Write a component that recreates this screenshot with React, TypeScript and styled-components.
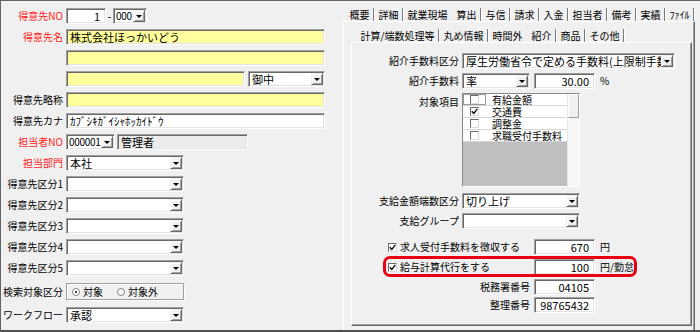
import { Fragment } from 'react'
import styled, { createGlobalStyle, css } from 'styled-components'

const GlobalStyle = createGlobalStyle`
  html, body {
    margin: 0;
    padding: 0;
    background: #f0f0f0;
  }
  body {
    font-family: "Noto Sans CJK JP", "Noto Sans", sans-serif;
    color: #000;
  }
  * {
    box-sizing: border-box;
  }
`

const sunken = css`
  height: 16px;
  border: 1px solid;
  border-color: #a0a0a0 #ffffff #ffffff #a0a0a0;
  box-shadow: inset 1px 1px 0 #696969, inset -1px -1px 0 #e3e3e3;
`

const Window = styled.div`
  width: 700px;
  height: 332px;
  display: flex;
  background: #f0f0f0;
  border-top: 1px solid #646464;
  border-left: 1px solid #646464;
  border-bottom: 2px solid #505050;
  overflow: hidden;
`

const LeftPanel = styled.div`
  width: 342px;
  flex: none;
  display: flex;
  flex-direction: column;
  padding-top: 7px;
`

const Row = styled.div<{ $mb?: number; $top?: boolean; $h?: number }>`
  display: flex;
  align-items: ${p => (p.$top ? 'flex-start' : 'center')};
  height: ${p => p.$h ?? 16}px;
  margin-bottom: ${p => p.$mb ?? 5}px;
  flex: none;
`

const Label = styled.div<{ $req?: boolean; $w?: number; $pt?: number; $mr?: number }>`
  width: ${p => p.$w ?? 62}px;
  flex: none;
  margin-right: ${p => p.$mr ?? 3}px;
  padding-top: ${p => p.$pt ?? 0}px;
  text-align: right;
  font-size: 10px;
  line-height: 12px;
  white-space: nowrap;
  color: ${p => (p.$req ? '#ff2020' : '#000')};
`

const Field = styled.div<{ $w: number; $bg?: string; $right?: boolean }>`
  ${sunken}
  width: ${p => p.$w}px;
  flex: none;
  background: ${p => p.$bg ?? '#ffffff'};
  padding: 0 5px 0 3px;
  font-size: 11px;
  line-height: 14px;
  text-align: ${p => (p.$right ? 'right' : 'left')};
  white-space: nowrap;
  overflow-x: clip;
`

const SelectBox = styled.div<{ $w: number }>`
  ${sunken}
  width: ${p => p.$w}px;
  flex: none;
  display: flex;
  align-items: center;
  background: #fff;
  padding: 1px;
`

const SelectText = styled.span<{ $tight?: boolean }>`
  flex: 1;
  min-width: 0;
  padding-left: ${p => (p.$tight ? 1 : 2)}px;
  font-size: ${p => (p.$tight ? 10 : 11)}px;
  letter-spacing: ${p => (p.$tight ? '-0.3px' : 'normal')};
  line-height: 12px;
  white-space: nowrap;
  overflow-x: clip;
`

const DropButton = styled.span`
  width: 12px;
  height: 12px;
  flex: none;
  display: flex;
  align-items: center;
  justify-content: center;
  background: #f0f0f0;
  border: 1px solid;
  border-color: #f0f0f0 #696969 #696969 #f0f0f0;
  box-shadow: inset 1px 1px 0 #fff, inset -1px -1px 0 #a0a0a0;

  &::after {
    content: '';
    border-left: 3px solid transparent;
    border-right: 3px solid transparent;
    border-top: 3px solid #000;
    margin-top: 1px;
  }
`

const Dash = styled.span`
  width: 7px;
  flex: none;
  text-align: center;
  font-size: 11px;
`

const Gap = styled.span<{ $w: number }>`
  width: ${p => p.$w}px;
  flex: none;
`

const GroupBox = styled.div`
  width: 119px;
  height: 18px;
  flex: none;
  display: flex;
  align-items: center;
  gap: 14px;
  padding-left: 5px;
  border: 1px solid;
  border-color: #a0a0a0 #fff #fff #a0a0a0;
  box-shadow: inset -1px -1px 0 #a0a0a0, inset 1px 1px 0 #fff;
`

const RadioItem = styled.span`
  display: flex;
  align-items: center;
  gap: 3px;
  font-size: 10px;
  line-height: 12px;
`

const RadioDot = styled.span<{ $on?: boolean }>`
  width: 8px;
  height: 8px;
  border-radius: 50%;
  border: 1px solid #808080;
  background: #fff;
  display: flex;
  align-items: center;
  justify-content: center;

  &::after {
    content: '';
    width: 2px;
    height: 2px;
    border-radius: 50%;
    background: ${p => (p.$on ? '#000' : 'transparent')};
  }
`

/* right side */

const RightPanel = styled.div`
  flex: 1;
  display: flex;
  flex-direction: column;
`

const TabStrip = styled.div<{ $pl: number }>`
  height: 20px;
  flex: none;
  display: flex;
  align-items: flex-end;
  padding-left: ${p => p.$pl}px;
`

const Tab = styled.span<{ $active?: boolean }>`
  padding: 0 3.5px;
  font-size: 10px;
  line-height: 13px;
  white-space: nowrap;
  color: #000;
`

const Sep = styled.span<{ $hidden?: boolean }>`
  width: 2px;
  height: 13px;
  flex: none;
  border-left: 1px solid #7a7a7a;
  border-right: 1px solid #fff;
  visibility: ${p => (p.$hidden ? 'hidden' : 'visible')};
`

const OuterPage = styled.div`
  flex: 1;
  display: flex;
  flex-direction: column;
  margin-right: 5px;
  padding: 0 2px 0 7px;
  border-left: 1px solid #fff;
  border-top: 1px solid #fff;
  border-right: 1px solid #696969;
  box-shadow: inset -1px 0 0 #a0a0a0;
`

const InnerPage = styled.div`
  flex: 1;
  display: flex;
  flex-direction: column;
  margin-bottom: 4px;
  padding-top: 10px;
  border-left: 1px solid #fff;
  border-top: 1px solid #fff;
  border-right: 1px solid #696969;
  border-bottom: 1px solid #696969;
  box-shadow: inset -1px -1px 0 #a0a0a0;
`

const Unit = styled.span`
  margin-left: 5px;
  font-size: 10px;
  line-height: 12px;
  white-space: nowrap;
`

const ListBox = styled.div`
  width: 118px;
  height: 94px;
  flex: none;
  display: flex;
  background: #c0c0c0;
  border: 1px solid;
  border-color: #8a8a8a #fff #fff #8a8a8a;
`

const ListRows = styled.div`
  flex: 1;
  display: flex;
  flex-direction: column;
`

const ListRow = styled.div`
  height: 12px;
  flex: none;
  display: flex;
  align-items: center;
  background: #fff;
  border-bottom: 1px solid #d4d4d4;
`

const CheckCell = styled.span<{ $focus?: boolean }>`
  width: 23px;
  height: 100%;
  flex: none;
  display: flex;
  align-items: center;
  justify-content: center;
  border: 1px solid ${p => (p.$focus ? '#9a9a9a' : 'transparent')};
`

const ItemText = styled.span`
  padding-left: 6px;
  font-size: 10px;
  line-height: 11px;
  white-space: nowrap;
`

const ScrollTrack = styled.div`
  width: 12px;
  flex: none;
  background: #f6f6f6;
  border-left: 1px solid #e6e6e6;
`

const ScrollThumb = styled.div`
  height: 24px;
  background: #f0f0f0;
  border: 1px solid;
  border-color: #fff #a0a0a0 #a0a0a0 #fff;
`

const Box = styled.span`
  width: 9px;
  height: 9px;
  flex: none;
  display: inline-flex;
  align-items: center;
  justify-content: center;
  background: #fff;
  border: 1px solid;
  border-color: #6a6a6a #d8d8d8 #d8d8d8 #6a6a6a;
`

const CheckLabel = styled.div`
  width: 178px;
  flex: none;
  margin-right: 4px;
  padding-left: 36px;
  display: flex;
  align-items: center;
  gap: 3px;
  font-size: 10px;
  line-height: 12px;
  white-space: nowrap;
`

const Highlighted = styled.div`
  position: relative;
`

const Annotation = styled.span`
  position: absolute;
  left: 31px;
  top: -3px;
  width: 254px;
  height: 21px;
  border: 3px solid #e60012;
  border-radius: 7px;
  pointer-events: none;
`

function Check({ on }: { on?: boolean }) {
  return (
    <Box>
      {on && (
        <svg width='7' height='7' viewBox='0 0 7 7'>
          <path d='M0.8 3.2 L2.8 5.4 L6.3 0.9' stroke='#000' strokeWidth='1.3' fill='none' />
        </svg>
      )}
    </Box>
  )
}

function Select({ w, value = '', tight }: { w: number; value?: string; tight?: boolean }) {
  return (
    <SelectBox $w={w}>
      <SelectText $tight={tight}>{value}</SelectText>
      <DropButton />
    </SelectBox>
  )
}

function Tabs({ items, active, pl }: { items: string[]; active: number; pl: number }) {
  return (
    <TabStrip $pl={pl}>
      {items.map((t, i) => (
        <Fragment key={t}>
          <Tab $active={i === active}>{t}</Tab>
          <Sep $hidden={i + 1 === active} />
        </Fragment>
      ))}
    </TabStrip>
  )
}

const mainTabs = ['概要', '詳細', '就業現場', '算出', '与信', '請求', '入金', '担当者', '備考', '実績', 'ﾌｧｲﾙ']
const subTabs = ['計算/端数処理等', '丸め情報', '時間外', '紹介', '商品', 'その他']
const items = [
  { name: '有給金額', on: false },
  { name: '交通費', on: true },
  { name: '調整金', on: false },
  { name: '求職受付手数料', on: false }
]

const YELLOW = '#ffff9e'

export default function App () {
  return (
    <>
      <GlobalStyle />
      <Window>
        <LeftPanel>
          <Row>
            <Label $req>得意先NO</Label>
            <Field $w={40} $right>1</Field>
            <Dash>-</Dash>
            <Select w={34} value='000' tight />
          </Row>
          <Row>
            <Label $req>得意先名</Label>
            <Field $w={259} $bg={YELLOW}>株式会社ほっかいどう</Field>
          </Row>
          <Row>
            <Label />
            <Field $w={259} $bg={YELLOW} />
          </Row>
          <Row>
            <Label />
            <Field $w={179} $bg={YELLOW} />
            <Gap $w={3} />
            <Select w={77} value='御中' />
          </Row>
          <Row>
            <Label>得意先略称</Label>
            <Field $w={259} $bg={YELLOW} />
          </Row>
          <Row>
            <Label>得意先カナ</Label>
            <Field $w={259}>ｶﾌﾞｼｷｶﾞｲｼｬﾎｯｶｲﾄﾞｳ</Field>
          </Row>
          <Row>
            <Label $req>担当者NO</Label>
            <Select w={49} value='000001' tight />
            <Gap $w={2} />
            <Field $w={131} $bg='#ececec'>管理者</Field>
          </Row>
          <Row>
            <Label $req>担当部門</Label>
            <Select w={118} value='本社' />
          </Row>
          {[1, 2, 3, 4, 5].map(n => (
            <Row key={n} $mb={n === 5 ? 7 : 5}>
              <Label>得意先区分{n}</Label>
              <Select w={118} />
            </Row>
          ))}
          <Row $h={18} $mb={6}>
            <Label>検索対象区分</Label>
            <GroupBox>
              <RadioItem><RadioDot $on />対象</RadioItem>
              <RadioItem><RadioDot />対象外</RadioItem>
            </GroupBox>
          </Row>
          <Row>
            <Label>ワークフロー</Label>
            <Select w={118} value='承認' />
          </Row>
        </LeftPanel>

        <RightPanel>
          <Tabs items={mainTabs} active={3} pl={3} />
          <OuterPage>
            <Tabs items={subTabs} active={3} pl={6} />
            <InnerPage>
              <Row $mb={4}>
                <Label $w={107}>紹介手数料区分</Label>
                <Select w={213} value='厚生労働省令で定める手数料(上限制手数料)' />
              </Row>
              <Row $mb={4}>
                <Label $w={107}>紹介手数料</Label>
                <Select w={68} value='率' />
                <Gap $w={4} />
                <Field $w={61} $right>30.00</Field>
                <Unit>%</Unit>
              </Row>
              <Row $mb={6} $top $h={94}>
                <Label $w={107} $pt={3}>対象項目</Label>
                <ListBox>
                  <ListRows>
                    {items.map((it, i) => (
                      <ListRow key={it.name}>
                        <CheckCell $focus={i === 0}><Check on={it.on} /></CheckCell>
                        <ItemText>{it.name}</ItemText>
                      </ListRow>
                    ))}
                  </ListRows>
                  <ScrollTrack>
                    <ScrollThumb />
                  </ScrollTrack>
                </ListBox>
              </Row>
              <Row $mb={4}>
                <Label $w={107}>支給金額端数区分</Label>
                <Select w={118} value='切り上げ' />
              </Row>
              <Row $mb={10}>
                <Label $w={107}>支給グループ</Label>
                <Select w={118} />
              </Row>
              <Row $mb={4}>
                <CheckLabel><Check on />求人受付手数料を徴収する</CheckLabel>
                <Field $w={61} $right>670</Field>
                <Unit>円</Unit>
              </Row>
              <Highlighted>
                <Row $mb={4}>
                  <CheckLabel><Check on />給与計算代行をする</CheckLabel>
                  <Field $w={61} $right>100</Field>
                  <Unit>円/勤怠</Unit>
                </Row>
                <Annotation />
              </Highlighted>
              <Row $mb={2}>
                <Label $w={178} $mr={4}>税務署番号</Label>
                <Field $w={61} $right>04105</Field>
              </Row>
              <Row>
                <Label $w={178} $mr={4}>整理番号</Label>
                <Field $w={61} $right>98765432</Field>
              </Row>
            </InnerPage>
          </OuterPage>
        </RightPanel>
      </Window>
    </>
  )
}
